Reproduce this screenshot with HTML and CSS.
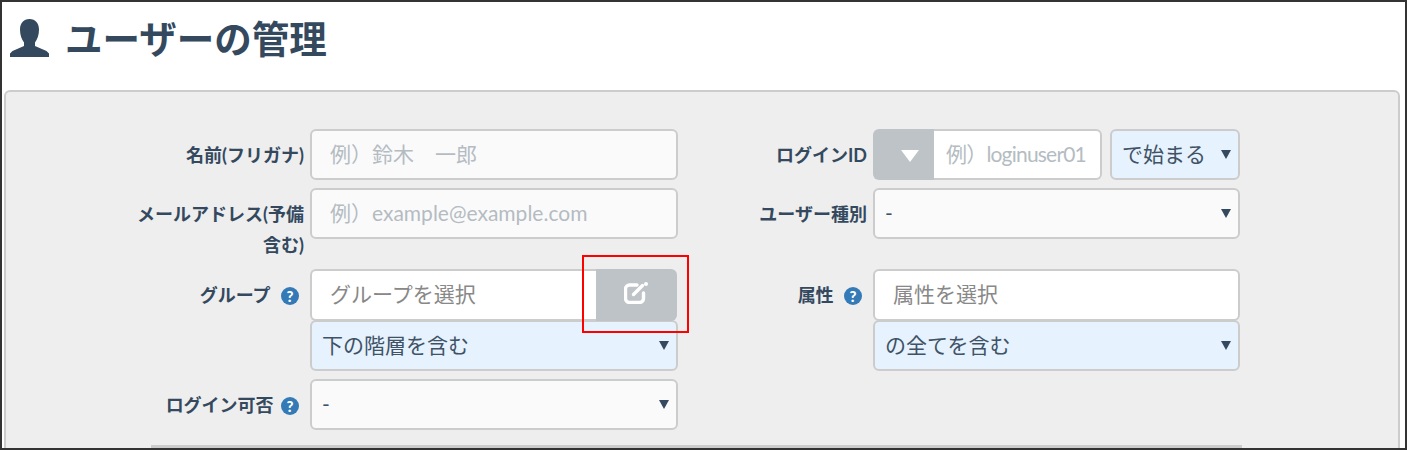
FILE: index.html
```html
<!DOCTYPE html>
<html lang="ja">
<head>
<meta charset="utf-8">
<title>ユーザーの管理</title>
<link rel="stylesheet" href="styles.css">
</head>
<body>
<div class="frame">
  <header class="page-head">
    <svg class="user-icon" viewBox="0 0 39 38" aria-hidden="true"><path d="M19.5 0C13.5 0 10 4.500 10 10.500C10 16 11.500 20 14 23.500V27L2.500 32L0 34.500V38H39V34.500L36.500 32L25 27V23.500C27.500 20 29 16 29 10.500C29 4.500 25.500 0 19.500 0Z"/></svg>
    <h1 class="page-title">ユーザーの管理</h1>
  </header>
  <section class="panel">
    <div class="form">
      <div class="fields">
        <label class="field-label">名前(フリガナ)</label>
        <input class="text-input" placeholder="例）鈴木　一郎">
        <label class="field-label">ログインID</label>
        <div class="login-group">
          <div class="addon"><svg class="addon-arrow" viewBox="0 0 18 12" aria-hidden="true"><path d="M0 0H18L9 12Z"/></svg></div>
          <input class="text-input login-input" placeholder="例）loginuser01">
          <div class="select-wrap match-select">
            <select class="select select-blue"><option>で始まる</option></select>
            <span class="caret"></span>
          </div>
        </div>

        <label class="field-label">メールアドレス(予備含む)</label>
        <input class="text-input" placeholder="例）example@example.com">
        <label class="field-label">ユーザー種別</label>
        <div class="select-wrap">
          <select class="select"><option>-</option></select>
          <span class="caret"></span>
        </div>

        <label class="field-label">グループ <span class="help wide">?</span></label>
        <div class="stack">
          <div class="picker">
            <input class="text-input picker-input" placeholder="グループを選択">
            <button class="edit-btn" type="button">
              <svg class="edit-icon" viewBox="0 0 24 22" aria-hidden="true"><path class="edit-box" d="M13 3H5.500A4 4 0 0 0 1.500 7V16.500A4 4 0 0 0 5.500 20.500H15.500A4 4 0 0 0 19.500 16.500V11"/><path class="edit-pen" d="M9.500 12.500L18.500 3.500"/><circle class="edit-dot" cx="22" cy="2" r="2"/></svg>
            </button>
            <span class="callout"></span>
          </div>
          <div class="select-wrap">
            <select class="select select-blue"><option>下の階層を含む</option></select>
            <span class="caret"></span>
          </div>
        </div>
        <label class="field-label">属性 <span class="help wide">?</span></label>
        <div class="stack">
          <input class="text-input picker-input full" placeholder="属性を選択">
          <div class="select-wrap">
            <select class="select select-blue"><option>の全てを含む</option></select>
            <span class="caret"></span>
          </div>
        </div>

        <label class="field-label">ログイン可否 <span class="help">?</span></label>
        <div class="select-wrap">
          <select class="select"><option>-</option></select>
          <span class="caret"></span>
        </div>
      </div>
      <div class="sub-box"></div>
    </div>
  </section>
</div>
</body>
</html>
```

FILE: styles.css
```css
* { box-sizing: border-box; }

html, body {
  margin: 0;
  padding: 0;
  background: #fff;
}

body {
  font-family: "Lato", "Noto Sans CJK JP", sans-serif;
  color: #2c3e50;
}

.frame {
  height: 450px;
  border: 2px solid #333;
  overflow: hidden;
  background: #fff;
}

.page-head {
  height: 88px;
  display: flex;
  align-items: flex-start;
  padding: 17px 0 0 8px;
}

.user-icon {
  width: 39px;
  height: 38px;
  fill: #34495e;
  flex: none;
}

.page-title {
  margin: -3px 0 0 16px;
  font-size: 37.5px;
  line-height: 46px;
  font-weight: 700;
  color: #34495e;
}

.panel {
  margin: 0 5px 0 2px;
  height: 400px;
  padding: 37px 0 0 124px;
  background: #eee;
  border: 2px solid #ccc;
  border-radius: 6px;
}

.form { width: 1110px; }

.fields {
  display: grid;
  grid-template-columns: 180px 368px 195px 367px;
  row-gap: 8px;
  align-items: start;
}

.field-label {
  display: block;
  padding: 11px 6px 0 5px;
  font-size: 18px;
  line-height: 31px;
  font-weight: 700;
  text-align: right;
  color: #34495e;
}

.text-input,
.select {
  display: block;
  width: 100%;
  height: 51px;
  margin: 0;
  border: 2px solid #ccc;
  border-radius: 6px;
  font-family: inherit;
  font-size: 21px;
  color: #3f5266;
  outline: none;
}

.text-input {
  padding: 0 18px 3px;
  background: #fafafa;
}

.text-input::placeholder {
  color: #b4bcc2;
  opacity: 1;
}

.select {
  padding: 0 30px 2px 10px;
  background: #fafafa;
  appearance: none;
  -webkit-appearance: none;
}

.select-blue { background: #e6f2fd; }

.select-wrap { position: relative; }

.caret {
  position: absolute;
  top: 50%;
  right: 9px;
  margin-top: -5px;
  width: 0;
  height: 0;
  border-left: 5px solid transparent;
  border-right: 5px solid transparent;
  border-top: 9px solid #34495e;
  pointer-events: none;
}

.login-group {
  display: flex;
  height: 51px;
}

.addon {
  flex: none;
  width: 61px;
  padding: 21px 0 0 28px;
  background: #bdc3c7;
  border-radius: 6px 0 0 6px;
}

.addon-arrow {
  display: block;
  width: 18px;
  height: 12px;
  fill: #fff;
}

.login-input {
  flex: none;
  width: 168px;
  padding: 0 0 3px 12px;
  background: #fff;
  border-left: 0;
  border-radius: 0 6px 6px 0;
  letter-spacing: -0.8px;
}

.match-select {
  flex: none;
  width: 130px;
  margin-left: 8px;
}

.stack {
  display: flex;
  flex-direction: column;
}

.stack .select-wrap { margin-top: -1px; }

.picker {
  position: relative;
  z-index: 1;
  display: flex;
  height: 52px;
}

.picker-input {
  height: 52px;
  background: #fff;
  color: #888;
}

.picker-input::placeholder { color: #888; }

.picker .picker-input {
  flex: 1;
  min-width: 0;
  border-right: 0;
  border-radius: 6px 0 0 6px;
}

.full { width: 100%; }

.edit-btn {
  flex: none;
  width: 81px;
  margin: 0 1px 0 0;
  padding: 0;
  border: 0;
  border-radius: 0 6px 6px 0;
  background: #bdc3c7;
  display: flex;
  align-items: center;
  justify-content: center;
}

.edit-icon {
  width: 24px;
  height: 22px;
  margin: -5px 0 0 -2px;
}

.edit-box,
.edit-pen {
  fill: none;
  stroke: #fff;
  stroke-width: 3.4;
  stroke-linecap: round;
}

.edit-dot { fill: #fff; }

.help {
  display: inline-block;
  width: 18px;
  height: 18px;
  margin: 0 5px 0 3px;
  border-radius: 50%;
  background: #337ab7;
  color: #fff;
  font-size: 15px;
  line-height: 18px;
  font-weight: 900;
  text-align: center;
  vertical-align: 0;
}

.help.wide { margin-left: 6px; }

.callout {
  position: absolute;
  left: 272px;
  top: -14px;
  width: 107px;
  height: 78px;
  border: 2px solid #f00;
  pointer-events: none;
}

.sub-box {
  height: 40px;
  margin: 15px -2px 0 21px;
  border: 3px solid #ccc;
  border-bottom: 0;
}
```
